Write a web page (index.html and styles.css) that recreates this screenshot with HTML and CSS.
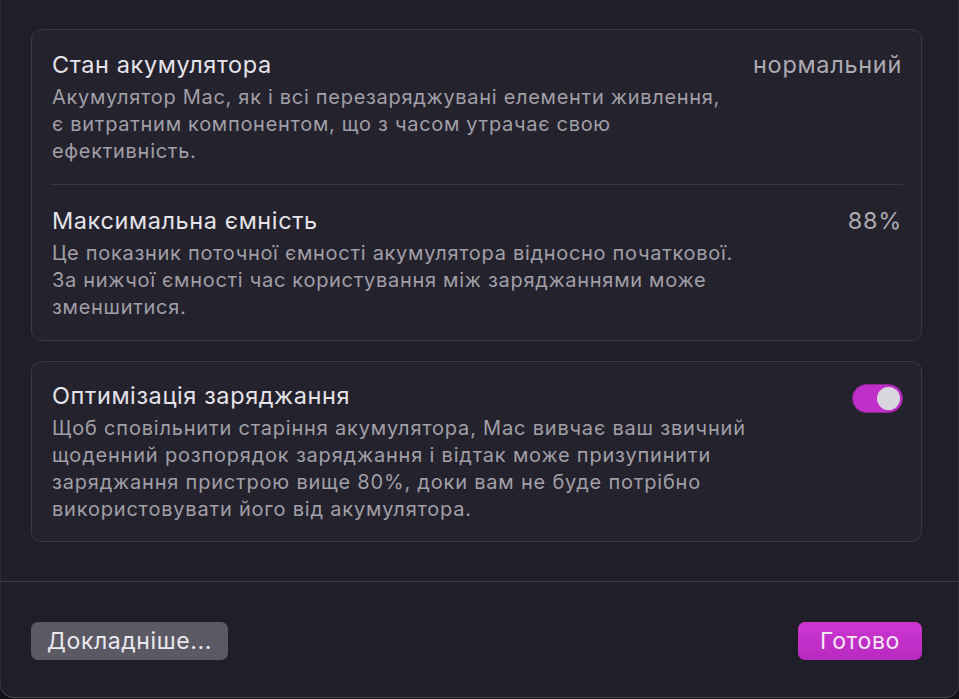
FILE: index.html
```html
<!DOCTYPE html>
<html lang="uk">
<head>
<meta charset="utf-8">
<link rel="stylesheet" href="styles.css">
</head>
<body>
<div class="window">
  <div class="content">
    <section class="card">
      <div class="row first">
        <div class="row-head">
          <div class="title">Стан акумулятора</div>
          <div class="value">нормальний</div>
        </div>
        <p class="desc">Акумулятор Mac, як і всі перезаряджувані елементи живлення,<br>є витратним компонентом, що з часом утрачає свою<br>ефективність.</p>
      </div>
      <div class="divider"></div>
      <div class="row second">
        <div class="row-head">
          <div class="title">Максимальна ємність</div>
          <div class="value">88%</div>
        </div>
        <p class="desc">Це показник поточної ємності акумулятора відносно початкової.<br>За нижчої ємності час користування між заряджаннями може<br>зменшитися.</p>
      </div>
    </section>
    <section class="card card2">
      <div class="row third">
        <div class="row-head">
          <div class="title">Оптимізація заряджання</div>
          <div class="toggle"><span class="knob"></span></div>
        </div>
        <p class="desc wide">Щоб сповільнити старіння акумулятора, Mac вивчає ваш звичний<br>щоденний розпорядок заряджання і відтак може призупинити<br>заряджання пристрою вище 80%, доки вам не буде потрібно<br>використовувати його від акумулятора.</p>
      </div>
    </section>
  </div>
  <div class="footer">
    <button class="btn btn-secondary">Докладніше...</button>
    <button class="btn btn-primary">Готово</button>
  </div>
</div>
</body>
</html>
```
FILE: styles.css
```css
* { box-sizing: border-box; }
html, body { margin: 0; padding: 0; }
body {
  background: #121118;
  font-family: Inter, "Noto Sans", sans-serif;
  width: 959px;
  height: 699px;
  overflow: hidden;
}
.window {
  width: 959px;
  height: 698px;
  background: #201e29;
  border-radius: 0 0 14px 14px;
  box-shadow: inset 0 -1px 0 #4a4852, inset 1px 0 0 #2e2c36, inset -1px 0 0 #2e2c36;
  display: flex;
  flex-direction: column;
}
.content {
  padding: 29px 37px 0 31px;
  display: flex;
  flex-direction: column;
  gap: 20px;
  height: 581px;
}
.card {
  background: #24222d;
  border: 1px solid #3a3843;
  border-radius: 10px;
  padding: 0 18px 0 19px;
}
.row-head {
  display: flex;
  justify-content: space-between;
  align-items: flex-start;
  height: 28px;
}
.row.first { padding: 21px 0 19px; }
.row.second { padding: 22px 0 19px; }
.row.third { padding: 20px 0 18px; }
.title {
  font-size: 23.5px;
  line-height: 28px;
  color: #e6e4ea;
  letter-spacing: 0.6px;
  padding-left: 1px;
}
.value {
  font-size: 23.5px;
  line-height: 28px;
  color: #adabb2;
  letter-spacing: 0.7px;
  padding-right: 1px;
}
.desc {
  margin: 5px 0 0 1px;
  font-size: 20px;
  line-height: 27px;
  color: #a19fa7;
  letter-spacing: 0.7px;
}
.desc.wide { letter-spacing: 0.8px; }
.divider {
  height: 1px;
  background: #393742;
}
.toggle {
  width: 51px;
  height: 29px;
  border-radius: 15px;
  background: #c12fc9;
  border: 1px solid #8a2592;
  position: relative;
  margin-top: 2px;
}
.knob {
  position: absolute;
  right: 2px;
  top: 2px;
  width: 23px;
  height: 23px;
  border-radius: 50%;
  background: #d9d7dd;
}
.footer {
  border-top: 1px solid #3d3b46;
  display: flex;
  justify-content: space-between;
  padding: 40px 37px 0 31px;
}
.btn {
  font-family: Inter, "Noto Sans", sans-serif;
  font-size: 23px;
  letter-spacing: 0.6px;
  height: 38px;
  border-radius: 7px;
  border: none;
  color: #ebe9ef;
  padding: 0;
  line-height: 38px;
  text-align: center;
}
.btn-secondary {
  background: #5b5963;
  width: 197px;
}
.btn-primary {
  background: linear-gradient(#cd35d2, #b82abf);
  width: 124px;
  color: #f6e8f6;
}
```
